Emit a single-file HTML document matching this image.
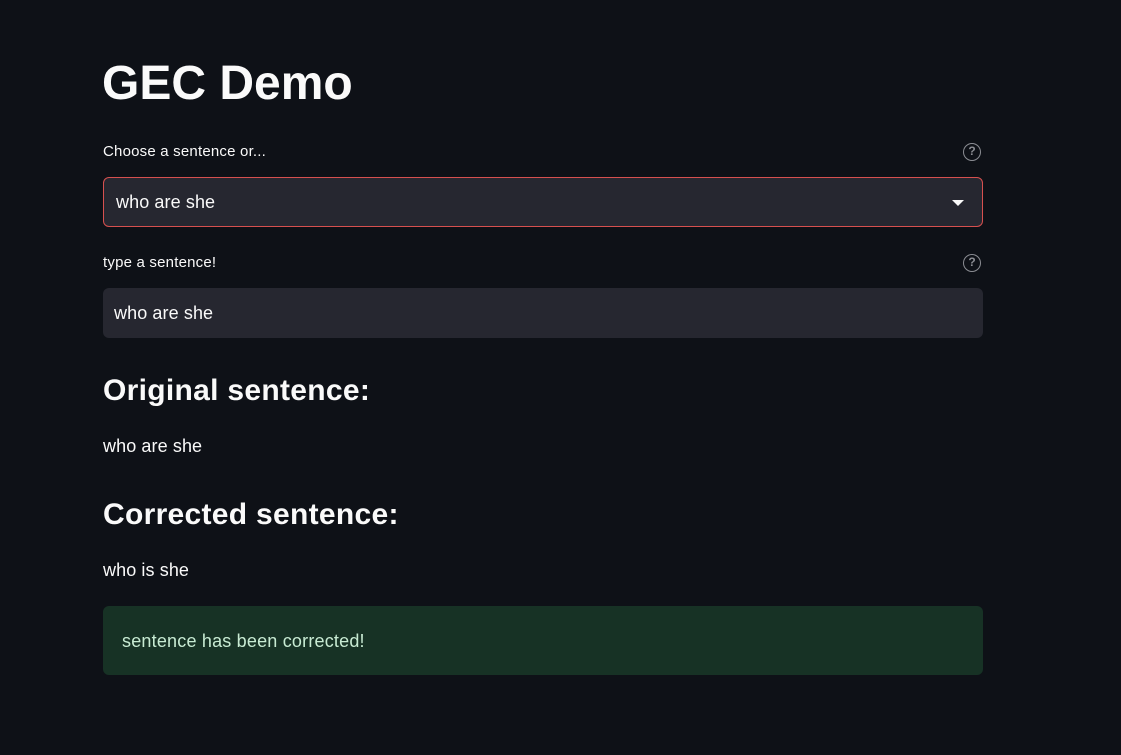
<!DOCTYPE html>
<html><head><style>
body{margin:0;width:1121px;height:755px;background:#0e1117;font-family:"Liberation Sans",sans-serif;color:#fafafa;position:relative;overflow:hidden}
.a{position:absolute;white-space:nowrap}
.box{position:absolute;left:103px;width:880px;height:50px;background:#262730;border-radius:6px;box-sizing:border-box}
.q{position:absolute;left:963px;width:18px;height:18px;border:1.5px solid #8b8d93;border-radius:50%;color:#8b8d93;font-size:12px;font-weight:bold;text-align:center;box-sizing:border-box;line-height:15px}
</style></head><body>
<div class="a" style="left:102px;top:56px;font-size:48px;font-weight:bold;letter-spacing:0px">GEC Demo</div>
<div class="a" style="left:103px;top:143px;font-size:15px;letter-spacing:0.2px">Choose a sentence or...</div>
<div class="q" style="top:143px">?</div>
<div class="box" style="top:177px;border:1px solid #d6504f"></div>
<div class="a" style="left:116px;top:192px;font-size:18px;letter-spacing:0.1px">who are she</div>
<div class="a" style="left:952px;top:200px;width:0;height:0;border-left:6px solid transparent;border-right:6px solid transparent;border-top:6px solid #fafafa"></div>
<div class="a" style="left:103px;top:254px;font-size:15px;letter-spacing:0.2px">type a sentence!</div>
<div class="q" style="top:254px">?</div>
<div class="box" style="top:288px"></div>
<div class="a" style="left:114px;top:303px;font-size:18px;letter-spacing:0.1px">who are she</div>
<div class="a" style="left:103px;top:374px;font-size:30px;font-weight:bold;letter-spacing:0.3px">Original sentence:</div>
<div class="a" style="left:103px;top:436px;font-size:18px;letter-spacing:0.1px">who are she</div>
<div class="a" style="left:103px;top:498px;font-size:30px;font-weight:bold;letter-spacing:0.3px">Corrected sentence:</div>
<div class="a" style="left:103px;top:560px;font-size:18px;letter-spacing:0.1px">who is she</div>
<div class="a" style="left:103px;top:606px;width:880px;height:69px;background:#173225;border-radius:6px"></div>
<div class="a" style="left:122px;top:631px;font-size:18px;color:#c8ebd3;letter-spacing:0.2px">sentence has been corrected!</div>
</body></html>
